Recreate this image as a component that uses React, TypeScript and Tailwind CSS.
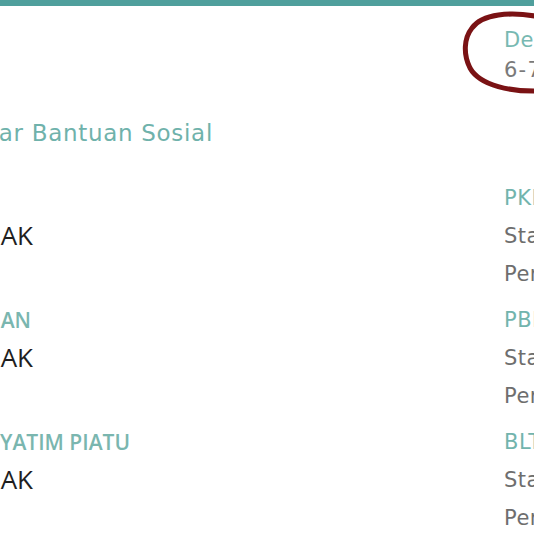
import React from "react";

const poppins = { fontFamily: '"DejaVu Sans", "Noto Sans", sans-serif' };

function LeftText({ end, text, className, style }: { end: number; text: string; className: string; style?: React.CSSProperties }) {
  return (
    <div className="flex justify-end" style={{ width: end }}>
      <span className={"shrink-0 whitespace-nowrap " + className} style={style}>{text}</span>
    </div>
  );
}

type Row = { left?: string; leftEnd?: number; value: string; prog: string };

const rows: Row[] = [
  { value: "TIDAK", prog: "PKH" },
  { left: "BANSOS PANGAN", leftEnd: 31, value: "TIDAK", prog: "PBI JK" },
  { left: "ATENSI YATIM PIATU", leftEnd: 130, value: "TIDAK", prog: "BLT BBM" },
];

export default function App() {
  return (
    <div className="relative w-[534px] h-[534px] overflow-hidden bg-white">
      <div className="h-[6px] bg-[#4f9f9c]" />
      <div className="flex justify-end pt-[19px]">
        <div className="w-[30px] shrink-0" style={poppins}>
          <div className="h-[30px] leading-[30px] text-[21px] tracking-[0.02em] text-[#78b9b2] whitespace-nowrap">Desa</div>
          <div className="h-[30px] leading-[30px] text-[21px] tracking-[0.06em] text-[#7a7a7a] whitespace-nowrap">6-7</div>
        </div>
      </div>
      <div className="mt-[30px] h-[36px] leading-[36px]">
        <LeftText end={213} text="Daftar Bantuan Sosial" className="text-[23px] tracking-[0.03em] text-[#6fb2ab]" style={poppins} />
      </div>
      <div className="mt-[28px] flex flex-col gap-[2px]">
        {rows.map((r, i) => (
          <div key={i} className="flex h-[120px]">
            <div className="flex-1 flex flex-col">
              <div className="h-[38px] leading-[38px]">
                {r.left && (
                  <LeftText
                    end={r.leftEnd!}
                    text={r.left}
                    className="text-[21px] font-semibold text-[#7ab6af] [font-family:'Open_Sans',sans-serif]"
                  />
                )}
              </div>
              <div className="h-[36px] leading-[36px]">
                <LeftText end={33} text={r.value} className="text-[26px] text-[#1f1f1f] [font-family:'Open_Sans',sans-serif]" />
              </div>
            </div>
            <div className="w-[30px] shrink-0 flex flex-col whitespace-nowrap tracking-[0.03em]" style={poppins}>
              <div className="h-[38px] leading-[38px] text-[21px] text-[#72b4ad]">{r.prog}</div>
              <div className="h-[38px] leading-[38px] text-[21px] text-[#6e6e6e]">Status</div>
              <div className="h-[38px] leading-[38px] text-[21px] text-[#6e6e6e]">Periode</div>
            </div>
          </div>
        ))}
      </div>
      <svg className="absolute left-0 top-0 pointer-events-none" width="534" height="100" viewBox="0 0 534 100">
        <path
          d="M540 17 C510 11 482 14 472 28 C464 38 463 54 470 68 C480 86 512 92 540 91"
          fill="none"
          stroke="#7a1214"
          strokeWidth="5"
          strokeLinecap="round"
        />
      </svg>
    </div>
  );
}
